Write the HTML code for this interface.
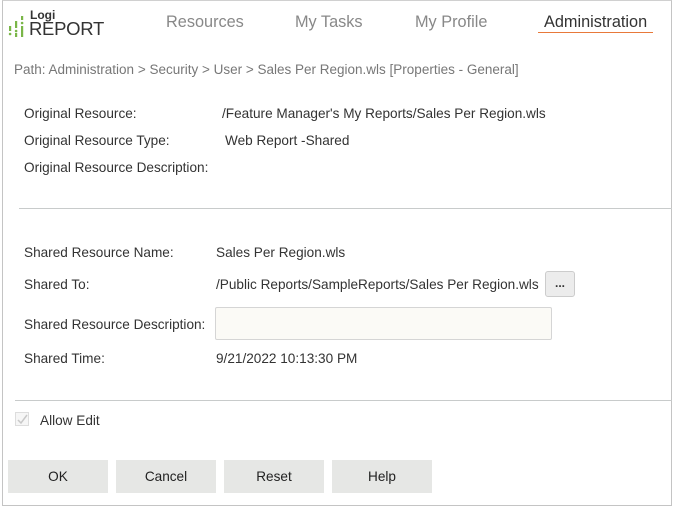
<!DOCTYPE html>
<html><head><meta charset="utf-8"><style>
*{margin:0;padding:0;box-sizing:border-box}
body{width:673px;height:507px;background:#fff;font-family:"Liberation Sans",sans-serif;color:#333;font-size:13.6px;position:relative;overflow:hidden}
.frame{position:absolute;left:2px;top:0;width:670px;height:506px;border:1px solid #c4c4c4;border-top:1px solid #d0d0d0}
.a{position:absolute;white-space:nowrap}
.nav{font-size:16.3px;color:#888;top:13px}
.hr{position:absolute;left:19px;right:1px;height:1px;background:#c8cbcb}
.btn{position:absolute;top:460px;width:100px;height:33px;background:#e6e7e5;text-align:center;line-height:33px;font-size:13.6px;color:#222}
</style></head><body>
<div class="frame"></div>
<svg class="a" style="left:8px;top:12px" width="20" height="26" viewBox="0 0 20 26">
<g fill="#7ab648"><rect x="1" y="14" width="2.2" height="5"/><circle cx="2.1" cy="22" r="1.3"/><rect x="7" y="9" width="2.2" height="7"/><circle cx="8.1" cy="19" r="1.3"/><rect x="7" y="21" width="2.2" height="4"/><rect x="13" y="4" width="2.2" height="4"/><circle cx="14.1" cy="11" r="1.3"/><rect x="13" y="14" width="2.2" height="11"/></g>
</svg>
<div class="a" style="left:30px;top:8px;font-size:12px;font-weight:bold;color:#333">Logi</div>
<div class="a" style="left:29px;top:18px;font-size:18.5px;color:#333;letter-spacing:-0.3px">REPORT</div>
<div class="a nav" style="left:166px">Resources</div>
<div class="a nav" style="left:295px">My Tasks</div>
<div class="a nav" style="left:415px">My Profile</div>
<div class="a nav" style="left:544px;color:#333">Administration</div>
<div class="a" style="left:538px;top:32px;width:115px;height:1px;background:#e8793a"></div>
<div class="a" style="left:14px;top:62px;font-size:13.5px;color:#777">Path: Administration &gt; Security &gt; User &gt; Sales Per Region.wls [Properties - General]</div>
<div class="a" style="left:24px;top:106px">Original Resource:</div>
<div class="a" style="left:222px;top:106px">/Feature Manager's My Reports/Sales Per Region.wls</div>
<div class="a" style="left:24px;top:133px">Original Resource Type:</div>
<div class="a" style="left:225px;top:133px">Web Report -Shared</div>
<div class="a" style="left:24px;top:160px">Original Resource Description:</div>
<div class="hr" style="top:208px"></div>
<div class="a" style="left:24px;top:245px">Shared Resource Name:</div>
<div class="a" style="left:216px;top:245px">Sales Per Region.wls</div>
<div class="a" style="left:24px;top:277px">Shared To:</div>
<div class="a" style="left:216px;top:277px">/Public Reports/SampleReports/Sales Per Region.wls</div>
<div class="a" style="left:545px;top:271px;width:30px;height:26px;background:#ececec;border:1px solid #ccc;border-radius:3px;text-align:center;line-height:22px;font-weight:bold;font-size:12px">...</div>
<div class="a" style="left:24px;top:317px">Shared Resource Description:</div>
<div class="a" style="left:215px;top:307px;width:337px;height:33px;background:#fbfaf6;border:1px solid #d5d5d5;border-radius:2px"></div>
<div class="a" style="left:24px;top:351px">Shared Time:</div>
<div class="a" style="left:216px;top:351px">9/21/2022 10:13:30 PM</div>
<div class="hr" style="top:400px;left:15px"></div>
<div class="a" style="left:15px;top:412px;width:14px;height:14px;border:1px solid #ddd;background:#f6f6f6"></div>
<svg class="a" style="left:16px;top:413px" width="13" height="13"><path d="M2 7 L5 10 L11 2" stroke="#c8c8c8" stroke-width="1.5" fill="none"/></svg>
<div class="a" style="left:40px;top:413px">Allow Edit</div>
<div class="btn" style="left:8px">OK</div>
<div class="btn" style="left:116px">Cancel</div>
<div class="btn" style="left:224px">Reset</div>
<div class="btn" style="left:332px">Help</div>
</body></html>
